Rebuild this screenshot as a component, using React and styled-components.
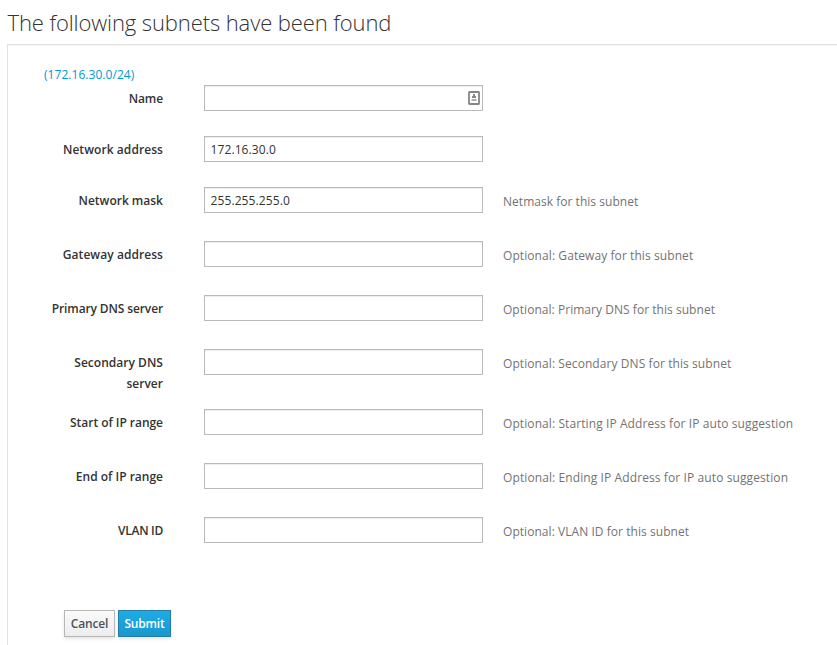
import React from "react";
import styled, { createGlobalStyle } from "styled-components";

const Global = createGlobalStyle`
  * { box-sizing: border-box; }
  body { margin: 0; background: #fff; color: #333; font: 12px/20px "Open Sans", sans-serif; overflow: hidden; }
`;
const Page = styled.main`width: 837px; height: 645px; padding: 7px 0 0 7px; overflow: hidden;`;
const Title = styled.h1`margin: 0; height: 37px; padding-left: 0.5px; font-size: 22px; line-height: 30px; font-weight: 300; letter-spacing: -0.1px;`;
const Panel = styled.section`height: 620px; border-left: 1px solid #e1e1e1; border-top: 1px solid #e1e1e1; padding-top: 20px; box-shadow: inset 0 1px 1px rgba(0,0,0,.04);`;
const Subnet = styled.a`display: block; height: 20px; margin-left: 36px; color: #0099d3; text-decoration: none; letter-spacing: 0.05px;`;
const Fields = styled.form`display: flex; flex-direction: column;`;
const Row = styled.div`display: grid; grid-template-columns: 155px 279px 1fr; height: ${(p) => p.$height}px;`;
const Label = styled.label`padding: 3px 0 0 30px; text-align: right; font-weight: 600; line-height: 21px; letter-spacing: ${(p) => p.$tracking}px;`;
const Control = styled.div`position: relative; width: 279px; margin-left: 41px; height: 26px;`;
const Input = styled.input`
  display: block; width: 279px; height: 26px; padding: 2px 5.5px; border: 1px solid #bababa; border-radius: 0;
  font: 12px/20px "Open Sans", sans-serif; letter-spacing: 0.1px; color: #333; box-shadow: inset 0 1px 1px rgba(0,0,0,.075); outline: 0;
`;
const Badge = styled.svg`position: absolute; right: 3px; top: 6px;`;
const Help = styled.span`padding: 5px 0 0 61px; line-height: 20px; color: #737373; white-space: nowrap; letter-spacing: ${(p) => p.$tracking}px;`;
const Actions = styled.div`display: flex; gap: 3px; margin: 39px 0 0 56px;`;
const Button = styled.button`
  height: 27px; width: ${(p) => p.$width}px; padding: 0; border-radius: 0; font: 600 12px/20px "Open Sans", sans-serif;
  letter-spacing: ${(p) => (p.$primary ? "-0.2px" : "-0.15px")};
  border: 1px solid ${(p) => (p.$primary ? "#267da1" : "#b7b7b7")};
  color: ${(p) => (p.$primary ? "#fff" : "#4d5258")};
  background: ${(p) => (p.$primary ? "linear-gradient(#1cace8, #1998cc)" : "linear-gradient(#fafafa, #ededed)")};
  box-shadow: 0 2px 3px rgba(0,0,0,.1);
`;

const fields = [
  { label: "Name", height: 51, labelTracking: -0.1 },
  { label: "Network address", value: "172.16.30.0", height: 51, labelTracking: 0.07 },
  { label: "Network mask", value: "255.255.255.0", help: "Netmask for this subnet", height: 54, helpTracking: 0.03 },
  { label: "Gateway address", help: "Optional: Gateway for this subnet", height: 54, labelTracking: 0.06, helpTracking: 0.08 },
  { label: "Primary DNS server", help: "Optional: Primary DNS for this subnet", height: 54, labelTracking: -0.12, helpTracking: 0.04 },
  { label: "Secondary DNS server", help: "Optional: Secondary DNS for this subnet", height: 60, labelTracking: 0.03, helpTracking: 0.08 },
  { label: "Start of IP range", help: "Optional: Starting IP Address for IP auto suggestion", height: 54, labelTracking: -0.04, helpTracking: 0.09 },
  { label: "End of IP range", help: "Optional: Ending IP Address for IP auto suggestion", height: 54, helpTracking: 0.1 },
  { label: "VLAN ID", help: "Optional: VLAN ID for this subnet", height: 54, labelTracking: -0.28, helpTracking: 0.05 },
];

export default function App() {
  return (
    <Page>
      <Global />
      <Title>The following subnets have been found</Title>
      <Panel>
        <Subnet>(172.16.30.0/24)</Subnet>
        <Fields>
          {fields.map(({ label, value = "", help, height, labelTracking = 0, helpTracking = 0 }, i) => (
            <Row key={label} $height={height}>
              <Label $tracking={labelTracking}>{label}</Label>
              <Control>
                <Input defaultValue={value} />
                {i === 0 && (
                  <Badge width="12" height="14" viewBox="0 0 12 14">
                    <rect x="1" y="1" width="10" height="12" rx="0.5" fill="#fff" stroke="#858585" strokeWidth="1.8" />
                    <path d="M5 3h2v2h1v2H4V5h1z" fill="#888" />
                    <path d="M3.5 9h5" stroke="#aaa" strokeWidth="2" />
                  </Badge>
                )}
              </Control>
              <Help $tracking={helpTracking}>{help}</Help>
            </Row>
          ))}
          <Actions>
            <Button type="button" $width={51}>Cancel</Button>
            <Button type="button" $width={53} $primary>Submit</Button>
          </Actions>
        </Fields>
      </Panel>
    </Page>
  );
}
